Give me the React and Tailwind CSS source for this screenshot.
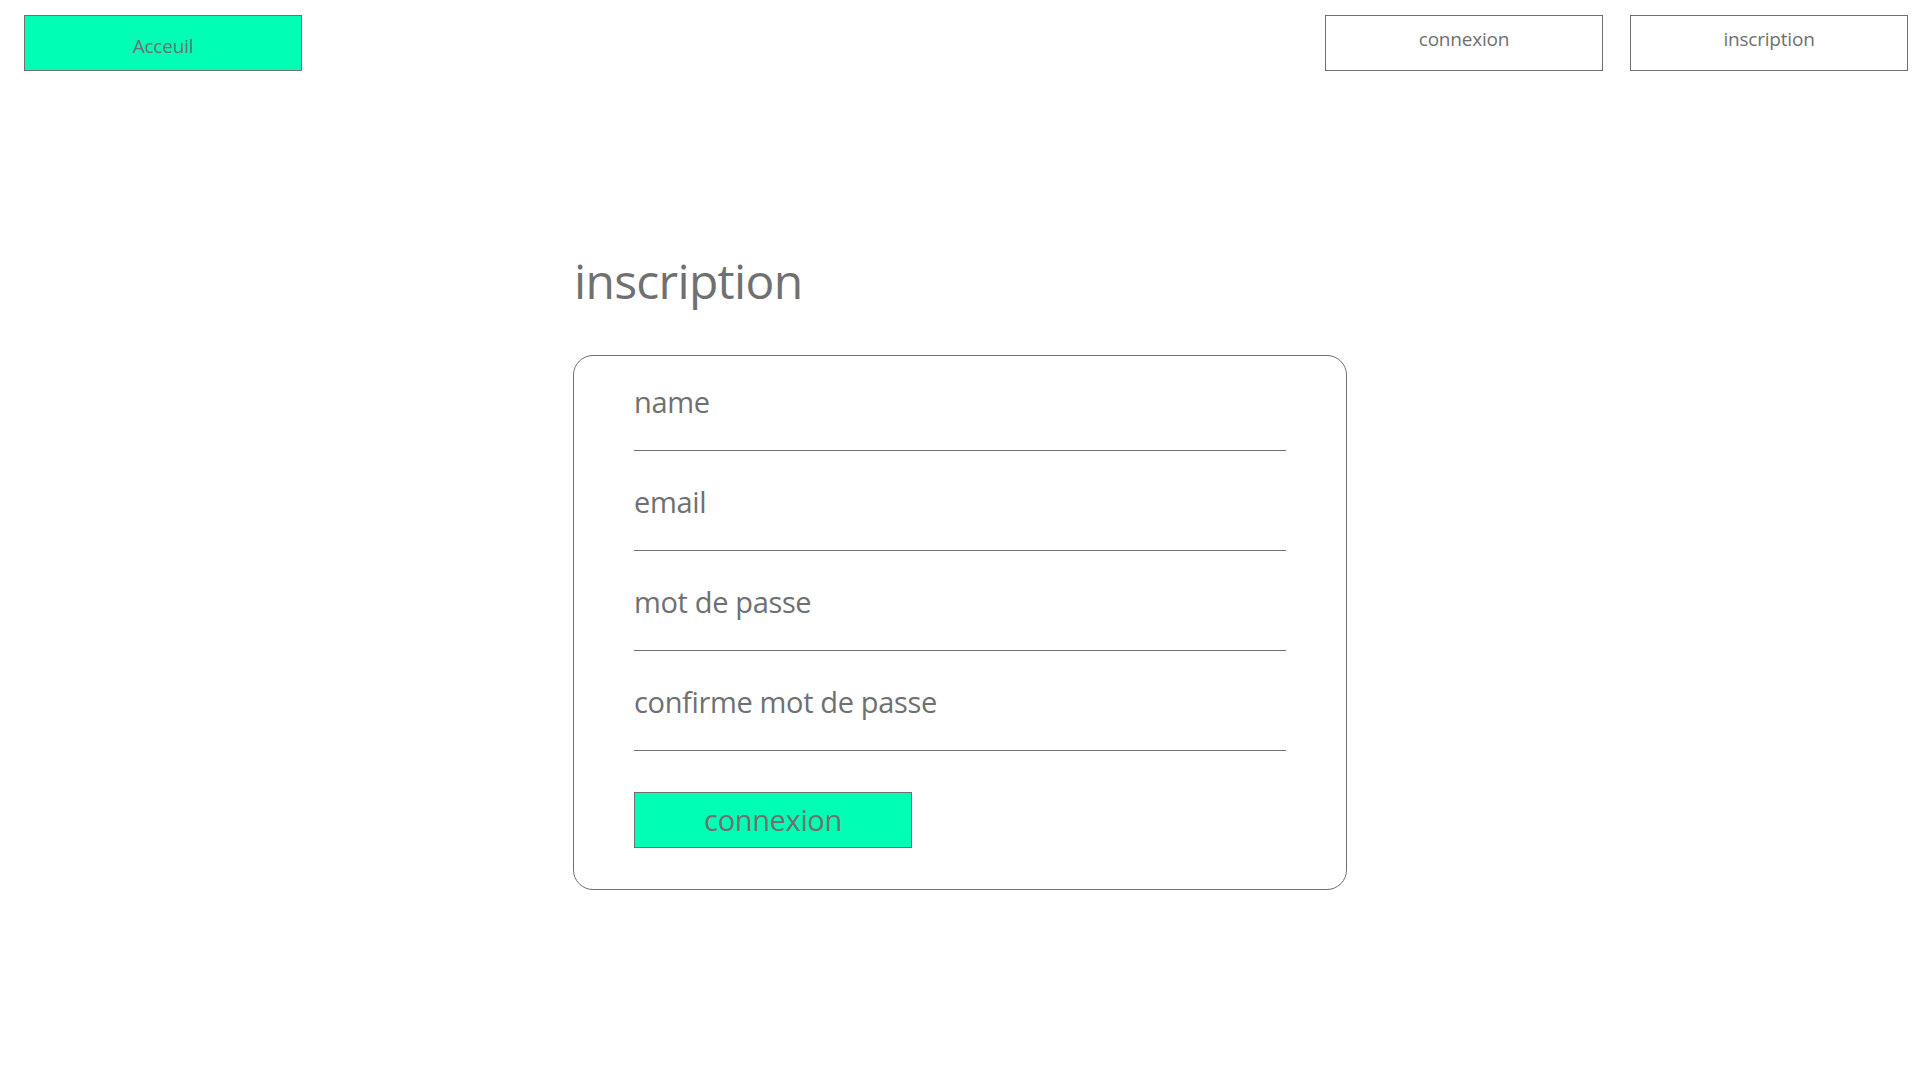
export default function App() {
  const fields = ["name", "email", "mot de passe", "confirme mot de passe"];
  return (
    <div
      className="min-h-screen bg-white text-[#707070]"
      style={{ fontFamily: '"Open Sans", "Noto Sans", sans-serif' }}
    >
      <header className="flex items-start pt-[15px] pl-[24px] pr-[12px]">
        <button className="w-[278px] h-[56px] border border-[#707070] bg-[#00FFB4] text-[19px] tracking-[-0.2px] leading-[24px] pt-[5px] text-[#707070]">
          Acceuil
        </button>
        <div className="ml-auto flex gap-[27px]">
          <button className="w-[278px] h-[56px] border border-[#707070] bg-white text-[19px] tracking-[-0.2px] leading-[24px] pb-[8px] text-[#707070]">
            connexion
          </button>
          <button className="w-[278px] h-[56px] border border-[#707070] bg-white text-[19px] tracking-[-0.2px] leading-[24px] pb-[8px] text-[#707070]">
            inscription
          </button>
        </div>
      </header>
      <main className="flex justify-center pt-[180px]">
        <div className="w-[774px]">
          <h1 className="text-[48px] tracking-[-0.7px] leading-[60px] font-normal pl-[1px]">inscription</h1>
          <div className="mt-[44px] border border-[#707070] rounded-[20px] px-[60px] pb-[41px]">
            {fields.map((f, i) => (
              <div
                key={f}
                className={
                  "border-b border-[#707070] text-[29px] tracking-[-0.35px] leading-[40px] pb-[28px] " +
                  (i === 0 ? "pt-[26px]" : "pt-[31px]")
                }
              >
                {f}
              </div>
            ))}
            <button className="mt-[41px] w-[278px] h-[56px] border border-[#707070] bg-[#00FFB4] text-[29px] tracking-[-0.35px] leading-[40px] text-[#707070]">
              connexion
            </button>
          </div>
        </div>
      </main>
    </div>
  );
}
